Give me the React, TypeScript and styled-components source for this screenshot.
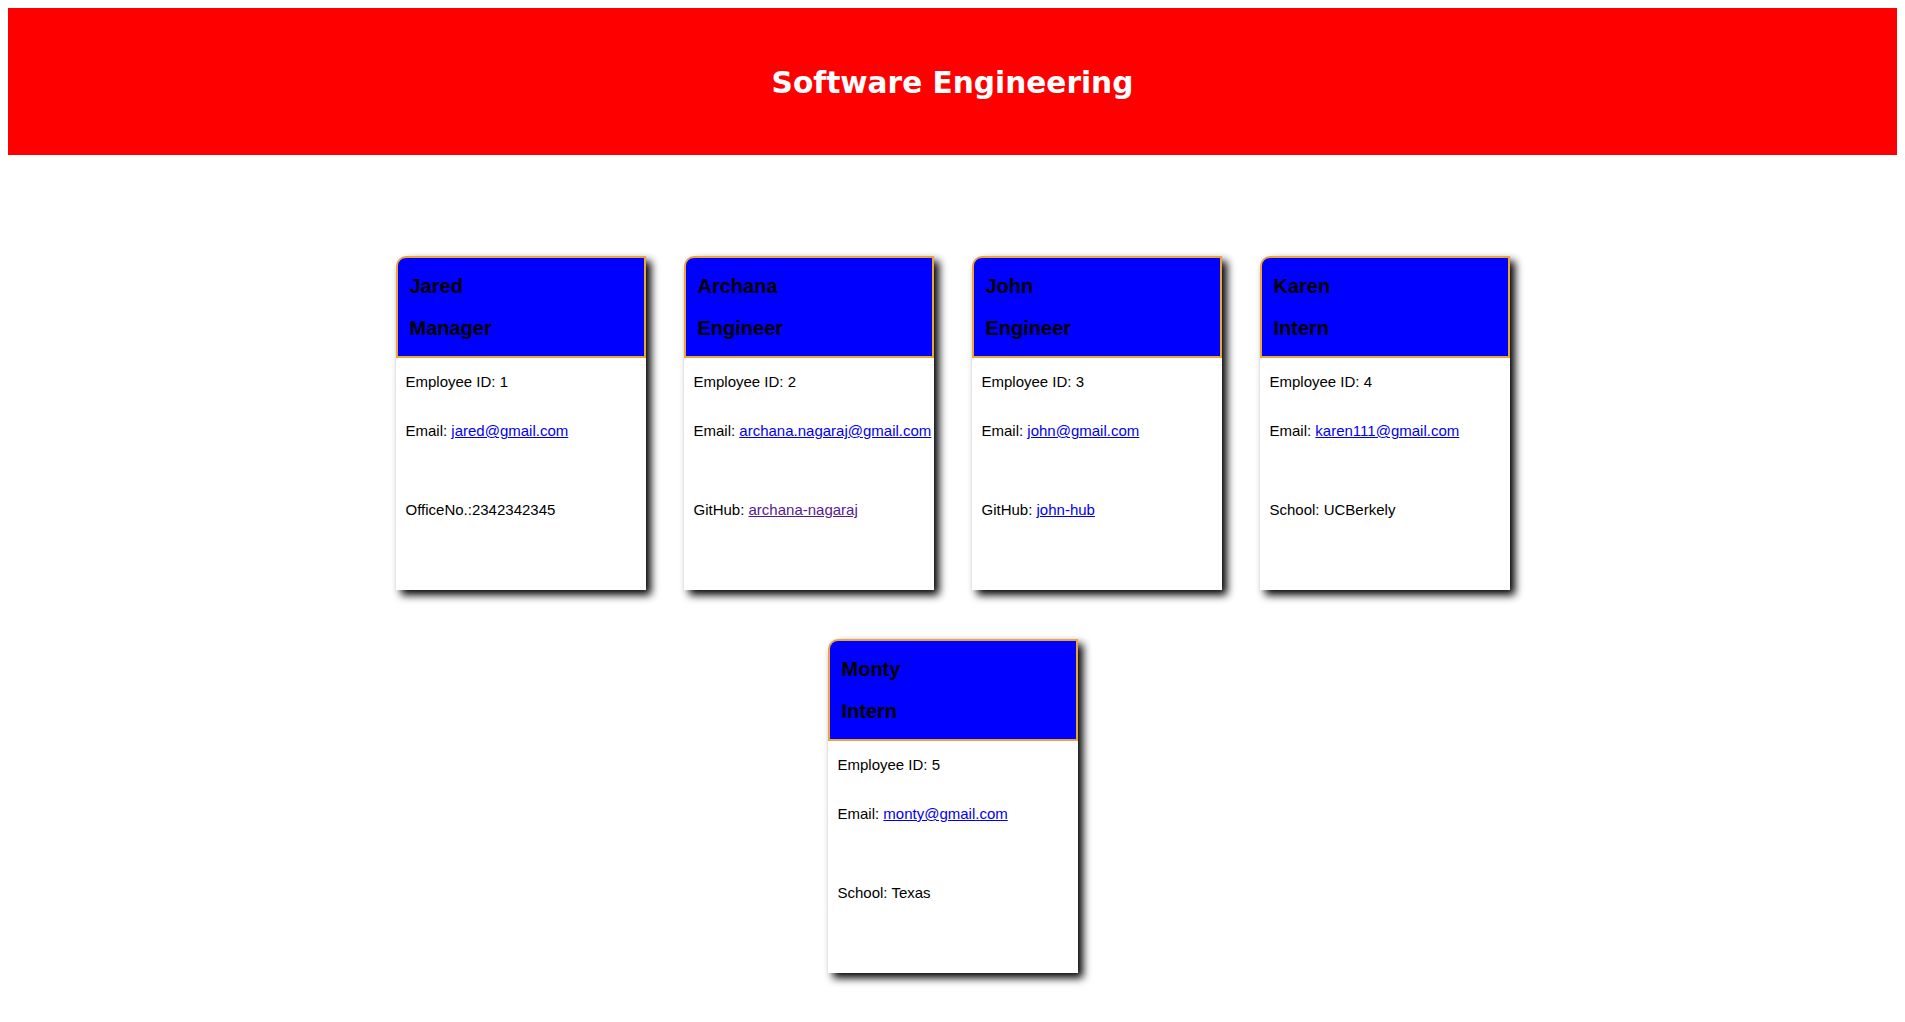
import React from 'react';
import styled, { createGlobalStyle } from 'styled-components';

type Employee = {
    name: string;
    role: string;
    id: number;
    email: string;
    extraLabel: string;
    extraValue: string;
    extraLink?: boolean;
    visited?: boolean;
};

const employees: Employee[] = [
    { name: 'Jared', role: 'Manager', id: 1, email: 'jared@gmail.com', extraLabel: 'OfficeNo.:', extraValue: '2342342345' },
    { name: 'Archana', role: 'Engineer', id: 2, email: 'archana.nagaraj@gmail.com', extraLabel: 'GitHub: ', extraValue: 'archana-nagaraj', extraLink: true, visited: true },
    { name: 'John', role: 'Engineer', id: 3, email: 'john@gmail.com', extraLabel: 'GitHub: ', extraValue: 'john-hub', extraLink: true },
    { name: 'Karen', role: 'Intern', id: 4, email: 'karen111@gmail.com', extraLabel: 'School: ', extraValue: 'UCBerkely' },
    { name: 'Monty', role: 'Intern', id: 5, email: 'monty@gmail.com', extraLabel: 'School: ', extraValue: 'Texas' },
];

const GlobalStyle = createGlobalStyle`
    body {
        margin: 8px;
        background: #ffffff;
        font-family: "Liberation Sans", Arial, sans-serif;
    }
`;

const Banner = styled.header`
    height: 147px;
    box-sizing: border-box;
    padding-top: 2px;
    background: #ff0000;
    display: flex;
    align-items: center;
    justify-content: center;
`;

const Title = styled.h1`
    margin: 0;
    color: #ffffff;
    font-family: "DejaVu Sans", Verdana, sans-serif;
    font-size: 29.6px;
    font-weight: bold;
`;

const Team = styled.main`
    width: 1152px;
    margin: 101px auto 0;
    display: flex;
    flex-wrap: wrap;
    justify-content: center;
`;

const Card = styled.section`
    width: 250px;
    margin: 0 19px 49px;
    background: #ffffff;
    border-top-left-radius: 10px;
    box-shadow: 5px 5px 8px #000000;
`;

const CardHeader = styled.div`
    background: #0000ff;
    border: 2px solid #eba43e;
    border-top-left-radius: 10px;
    padding: 17px 12px 16px;
`;

const HeaderLine = styled.h3`
    margin: 0;
    font-size: 20px;
    line-height: 23px;
    font-weight: bold;
    color: #000000;

    & + & {
        margin-top: 19px;
    }
`;

const CardBody = styled.div`
    height: 232px;
    box-sizing: border-box;
    padding: 15px 10px 0;
    font-size: 15px;
    line-height: 17px;
    color: #000000;
`;

const Detail = styled.p<{ $gap: number }>`
    margin: ${(p) => p.$gap}px 0 0;
    white-space: nowrap;
`;

const Link = styled.a<{ $visited?: boolean }>`
    color: ${(p) => (p.$visited ? '#551a8b' : '#0000ee')};
    text-decoration: underline;
`;

const EmployeeCard = ({ emp }: { emp: Employee }) => (
    <Card>
        <CardHeader>
            <HeaderLine>{emp.name}</HeaderLine>
            <HeaderLine>{emp.role}</HeaderLine>
        </CardHeader>
        <CardBody>
            <Detail $gap={0}>Employee ID: {emp.id}</Detail>
            <Detail $gap={32}>
                Email: <Link href="#">{emp.email}</Link>
            </Detail>
            <Detail $gap={62}>
                {emp.extraLabel}
                {emp.extraLink ? (
                    <Link href="#" $visited={emp.visited}>{emp.extraValue}</Link>
                ) : (
                    emp.extraValue
                )}
            </Detail>
        </CardBody>
    </Card>
);

export default function App() {
    return (
        <>
            <GlobalStyle />
            <Banner>
                <Title>Software Engineering</Title>
            </Banner>
            <Team>
                {employees.map((emp) => (
                    <EmployeeCard key={emp.id} emp={emp} />
                ))}
            </Team>
        </>
    );
}
